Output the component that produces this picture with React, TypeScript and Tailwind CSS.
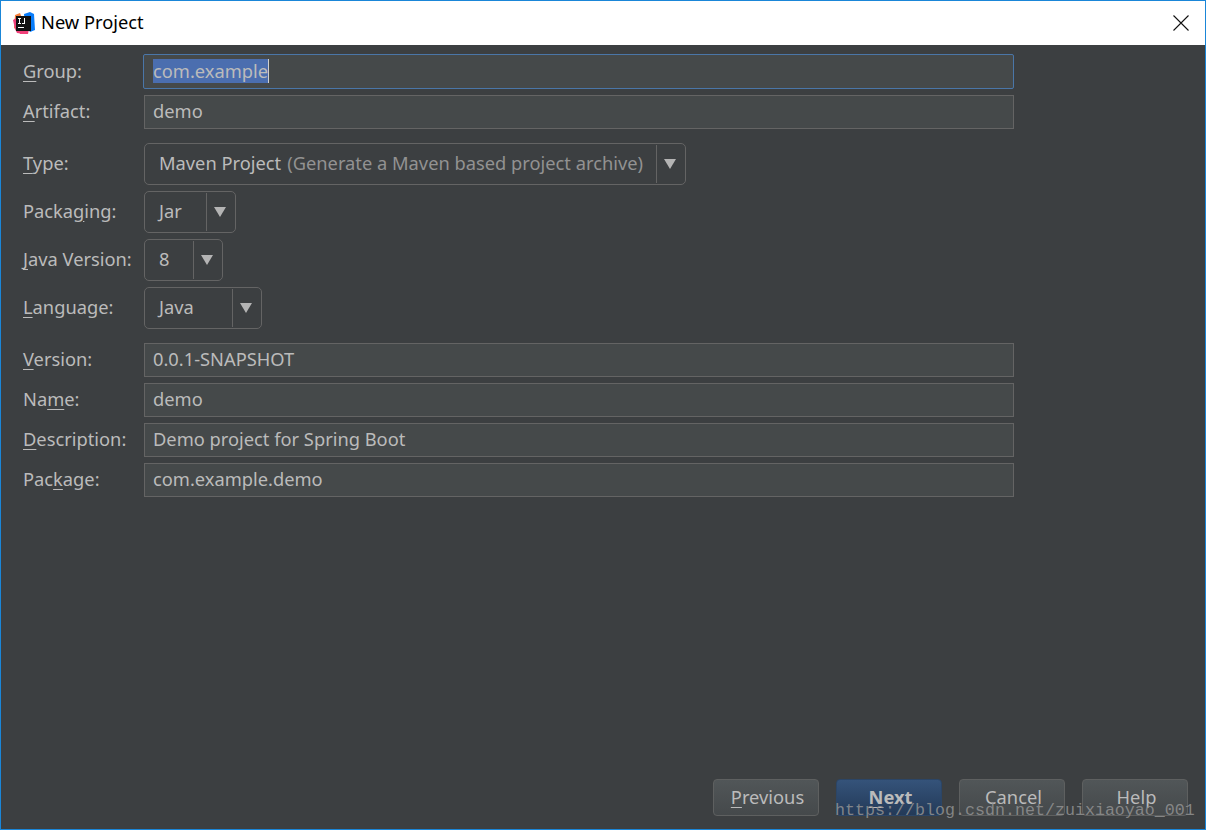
import React from 'react';

const font = "font-['Noto_Sans','Open_Sans',sans-serif]";

// label text with one underlined mnemonic letter
const Label = ({ before, mn, after }: { before: string; mn: string; after: string }) => (
  <div className="w-[121px] shrink-0 pb-[2px] text-[18.300px] text-[#bbbbbb]">
    {before}
    <span className="underline underline-offset-[3px]">{mn}</span>
    {after}
  </div>
);

const Field = ({ value }: { value: string }) => (
  <div className="flex h-[34px] w-[870px] items-center border border-[#646464] bg-[#45494a] px-[8px] pb-[2px] text-[18.300px] text-[#bbbbbb]">
    {value}
  </div>
);

const Combo = ({ width, children }: { width: string; children: React.ReactNode }) => (
  <div className={`flex h-[42px] items-stretch rounded-[5px] border border-[#646464] text-[18.300px] text-[#bbbbbb] ${width}`}>
    <div className="flex flex-1 items-center pb-[2px] pl-[14px]">{children}</div>
    <div className="my-[1px] flex w-[29px] items-center justify-center border-l border-[#646464] pr-[2px]">
      <svg width="12" height="10" viewBox="0 0 12 10">
        <path d="M0 0H12L6 10Z" fill="#b4b4b4" />
      </svg>
    </div>
  </div>
);

const Row = ({ children, className = '' }: { children: React.ReactNode; className?: string }) => (
  <div className={`flex items-center ${className}`}>{children}</div>
);

const FooterButton = ({ children, primary }: { children: React.ReactNode; primary?: boolean }) => (
  <div
    className={`flex h-[37px] w-[106px] items-center justify-center rounded-[4px] border pb-[2px] pl-[3px] text-[18.300px] ${
      primary
        ? 'border-[#2b4566] bg-gradient-to-b from-[#35537a] to-[#233a58] font-bold text-[#bbbbbb]'
        : 'border-[#5e6060] bg-gradient-to-b from-[#515658] to-[#45494b] text-[#bbbbbb]'
    }`}
  >
    {children}
  </div>
);

export default function App() {
  return (
    <div className={`relative flex h-[830px] w-[1206px] flex-col overflow-hidden border border-[#1a86d8] ${font}`}>
      <div className="flex h-[44px] shrink-0 items-center justify-between bg-white pl-[12px] pr-[16px]">
        <div className="flex items-center gap-[6px]">
          <svg className="mb-[1px]" width="22" height="22" viewBox="0 0 22 22">
            <path d="M2 3L7 1L9 6L4 18L1 16Z" fill="#f7803c" />
            <path d="M0 8L5 5L9 16L12 22L4 21L2 17Z" fill="#f0407a" />
            <path d="M11 2L17 0L21 2L22 18L17 20L12 12Z" fill="#087cfa" />
            <path d="M5 17L16 17L15 22L7 22Z" fill="#f0407a" />
            <rect x="3" y="4" width="15" height="15" fill="#111111" />
            <rect x="5" y="6" width="3" height="1" fill="#ffffff" />
            <rect x="6" y="6" width="1" height="6" fill="#ffffff" />
            <rect x="5" y="11" width="3" height="1" fill="#ffffff" />
            <rect x="11" y="6" width="1" height="6" fill="#ffffff" />
            <rect x="9" y="11" width="3" height="1" fill="#ffffff" />
            <rect x="5" y="15" width="6" height="1" fill="#ffffff" />
          </svg>
          <span className="pb-[2px] text-[18.300px] text-black">New Project</span>
        </div>
        <svg width="16" height="16" viewBox="0 0 16 16">
          <path d="M0.500 0.500L15.500 15.500M15.500 0.500L0.500 15.500" stroke="#111111" strokeWidth="1.100" fill="none" />
        </svg>
      </div>

      <div className="flex flex-1 flex-col bg-[#3c3f41] pl-[22px] pt-[9px]">
        <Row>
          <Label before="" mn="G" after="roup:" />
          <div className="-ml-px flex h-[35px] w-[871px] items-center rounded-[2px] border border-[#4a76a8] bg-[#45494a] pl-[9px] pb-[1px] text-[18.300px] text-[#bbbbbb]">
            <span className="border-r border-[#d0d0d0] bg-[#4b6eaf] leading-[24px]">com.example</span>
          </div>
        </Row>
        <Row className="mt-[6px]">
          <Label before="" mn="A" after="rtifact:" />
          <Field value="demo" />
        </Row>

        <Row className="mt-[14px]">
          <Label before="" mn="T" after="ype:" />
          <Combo width="w-[542px]">
            Maven Project<span className="ml-[6px] text-[#929292]">(Generate a Maven based project archive)</span>
          </Combo>
        </Row>
        <Row className="mt-[6px]">
          <Label before="Packa" mn="g" after="ing:" />
          <Combo width="w-[92px]">Jar</Combo>
        </Row>
        <Row className="mt-[6px]">
          <Label before="" mn="J" after="ava Version:" />
          <Combo width="w-[79px]">8</Combo>
        </Row>
        <Row className="mt-[6px]">
          <Label before="" mn="L" after="anguage:" />
          <Combo width="w-[118px]">Java</Combo>
        </Row>

        <Row className="mt-[14px]">
          <Label before="" mn="V" after="ersion:" />
          <Field value="0.0.1-SNAPSHOT" />
        </Row>
        <Row className="mt-[6px]">
          <Label before="Na" mn="m" after="e:" />
          <Field value="demo" />
        </Row>
        <Row className="mt-[6px]">
          <Label before="" mn="D" after="escription:" />
          <Field value="Demo project for Spring Boot" />
        </Row>
        <Row className="mt-[6px]">
          <Label before="Pac" mn="k" after="age:" />
          <Field value="com.example.demo" />
        </Row>

        <div className="mt-auto flex justify-end gap-[17px] pb-[13px] pr-[17px]">
          <FooterButton>
            <span className="underline underline-offset-[3px]">P</span>revious
          </FooterButton>
          <FooterButton primary>
            <span className="underline underline-offset-[3px]">N</span>ext
          </FooterButton>
          <FooterButton>Cancel</FooterButton>
          <FooterButton>Help</FooterButton>
        </div>
      </div>

      {/* blog watermark over the buttons */}
      <div className="absolute bottom-[8px] left-[834px] font-['Liberation_Mono',monospace] text-[16.670px] leading-[20px] text-[#929292]/85">
        https://blog.csdn.net/zuixiaoyao_001
      </div>
    </div>
  );
}
